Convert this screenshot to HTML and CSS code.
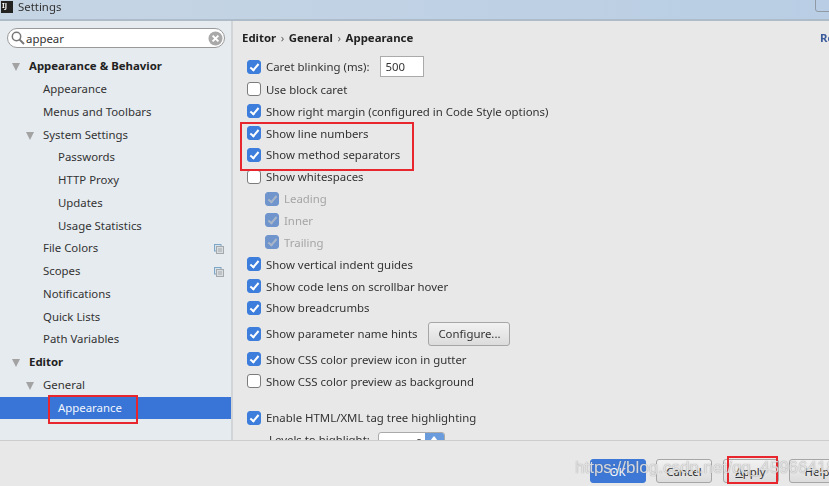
FILE: index.html
```html
<!DOCTYPE html>
<html lang="en">
<head>
    <meta charset="UTF-8">
    <meta name="viewport" content="width=device-width, initial-scale=1.0">
    <title>Settings</title>
    <link rel="stylesheet" href="styles.css">
</head>
<body>
    <div class="window">
        <div class="titlebar">
            <span class="logo">IJ</span>
            <span class="title">Settings</span>
            <span class="win-btn"></span>
        </div>

        <div class="main">
            <div class="sidebar">
                <div class="search">
                    <svg class="search-icon" width="14" height="14" viewBox="0 0 14 14"><circle cx="5.5" cy="5.5" r="4.2" fill="none" stroke="#777" stroke-width="1.5"/><path d="M8.6 8.6 L13 13" stroke="#777" stroke-width="2"/></svg>
                    <span class="search-text">appear</span>
                    <svg class="search-clear" width="15" height="15" viewBox="0 0 15 15"><circle cx="7.5" cy="7.5" r="7" fill="#a9a9a9"/><path d="M4.6 4.6 L10.4 10.4 M10.4 4.6 L4.6 10.4" stroke="#fff" stroke-width="2"/></svg>
                </div>
                <ul class="tree">
                    <li class="node bold"><span class="arrow"></span>Appearance &amp; Behavior</li>
                    <li class="node lvl1">Appearance</li>
                    <li class="node lvl1">Menus and Toolbars</li>
                    <li class="node lvl1"><span class="arrow"></span>System Settings</li>
                    <li class="node lvl2">Passwords</li>
                    <li class="node lvl2">HTTP Proxy</li>
                    <li class="node lvl2">Updates</li>
                    <li class="node lvl2">Usage Statistics</li>
                    <li class="node lvl1">File Colors
                        <svg class="copy-icon" width="10" height="10" viewBox="0 0 10 10"><rect x="0.5" y="0.5" width="6.5" height="6.5" fill="#d5e3ee" stroke="#7fa6c4"/><rect x="2.5" y="2.5" width="7" height="7" fill="#d9dde0" stroke="#a3a9ad"/><path d="M4 5 H8 M4 7 H8" stroke="#a3a9ad"/></svg>
                    </li>
                    <li class="node lvl1">Scopes
                        <svg class="copy-icon" width="10" height="10" viewBox="0 0 10 10"><rect x="0.5" y="0.5" width="6.5" height="6.5" fill="#d5e3ee" stroke="#7fa6c4"/><rect x="2.5" y="2.5" width="7" height="7" fill="#d9dde0" stroke="#a3a9ad"/><path d="M4 5 H8 M4 7 H8" stroke="#a3a9ad"/></svg>
                    </li>
                    <li class="node lvl1">Notifications</li>
                    <li class="node lvl1">Quick Lists</li>
                    <li class="node lvl1">Path Variables</li>
                    <li class="node bold"><span class="arrow"></span>Editor</li>
                    <li class="node lvl1"><span class="arrow"></span>General</li>
                    <li class="node lvl2 selected">Appearance</li>
                </ul>
            </div>

            <div class="content">
                <div class="crumbs">
                    <span>Editor</span><i>›</i><span>General</span><i>›</i><span>Appearance</span>
                    <span class="reset">Reset</span>
                </div>
                <div class="options">
                    <label class="row row-field"><input class="check" type="checkbox" checked>Caret blinking (ms):<span class="num">500</span></label>
                    <label class="row"><input class="check" type="checkbox">Use block caret</label>
                    <label class="row"><input class="check" type="checkbox" checked>Show right margin (configured in Code Style options)</label>
                    <label class="row"><input class="check" type="checkbox" checked>Show line numbers</label>
                    <label class="row"><input class="check" type="checkbox" checked>Show method separators</label>
                    <label class="row"><input class="check" type="checkbox">Show whitespaces</label>
                    <label class="row sub"><input class="check" type="checkbox" checked disabled>Leading</label>
                    <label class="row sub"><input class="check" type="checkbox" checked disabled>Inner</label>
                    <label class="row sub"><input class="check" type="checkbox" checked disabled>Trailing</label>
                    <label class="row"><input class="check" type="checkbox" checked>Show vertical indent guides</label>
                    <label class="row"><input class="check" type="checkbox" checked>Show code lens on scrollbar hover</label>
                    <label class="row"><input class="check" type="checkbox" checked>Show breadcrumbs</label>
                    <label class="row row-btn"><input class="check" type="checkbox" checked>Show parameter name hints<button class="btn configure">Configure...</button></label>
                    <label class="row"><input class="check" type="checkbox" checked>Show CSS color preview icon in gutter</label>
                    <label class="row"><input class="check" type="checkbox">Show CSS color preview as background</label>
                    <label class="row row-gap"><input class="check" type="checkbox" checked>Enable HTML/XML tag tree highlighting</label>
                    <div class="row levels">Levels to highlight:
                        <span class="spinner"><span class="spin-val">6</span><span class="spin-up"></span></span>
                    </div>
                </div>
            </div>
        </div>

        <div class="footer">
            <button class="btn primary">OK</button>
            <button class="btn">Cancel</button>
            <button class="btn"><u>A</u>pply</button>
            <button class="btn">Help</button>
        </div>
    </div>

    <!-- red marks drawn over the screenshot -->
    <div class="mark mark-rows"></div>
    <div class="mark mark-tree"></div>
    <div class="mark mark-apply"></div>
    <div class="watermark">https://blog.csdn.net/qq_45966418</div>
</body>
</html>
```

FILE: styles.css
```css
html, body {
    margin: 0;
    height: 100%;
    overflow: hidden;
}
body {
    position: relative;
    font-family: "Noto Sans", Arial, sans-serif;
    font-size: 11.4px;
    color: #333;
    background-color: #e8e8e8;
}
.window {
    display: flex;
    flex-direction: column;
    height: 486px;
    filter: blur(0.4px);
}

/* title bar */
.titlebar {
    display: flex;
    align-items: flex-start;
    flex: none;
    padding: 1px 0 0 1px;
    height: 18px;
    border-bottom: 2px solid #aebbc8;
    background: linear-gradient(90deg, #c6d5e4, #b9cee4);
    position: relative;
}
.logo {
    width: 12px;
    height: 12px;
    background-color: #222;
    color: #fff;
    font-size: 7px;
    font-weight: bold;
    line-height: 9px;
    padding-left: 1px;
    box-sizing: border-box;
}
.title {
    margin-left: 5px;
    line-height: 11px;
    color: #333;
}
.win-btn {
    position: absolute;
    right: -6px;
    top: -6px;
    width: 18px;
    height: 16px;
    border: 1px solid #8f9aa5;
    border-radius: 3px;
}

.main {
    display: flex;
    height: 419px;
    flex: none;
    overflow: hidden;
}

/* left tree */
.sidebar {
    width: 231px;
    flex: none;
    padding-top: 7px;
    background-color: #e6ebf0;
    border-right: 2px solid #d2d5d8;
}
.search {
    display: flex;
    align-items: center;
    height: 18px;
    margin: 0 6px 0 7px;
    padding: 0 1px 0 3px;
    background: white;
    border: 1px solid #999;
    border-radius: 10px;
}
.search-text {
    margin-left: 1px;
    flex: 1;
}
.tree {
    list-style: none;
    margin: 7.4px 0 0;
    padding: 0;
}
.node {
    position: relative;
    height: 22.75px;
    line-height: 22.75px;
    padding-left: 29px;
    white-space: nowrap;
}
.bold {
    font-weight: bold;
    color: #222;
}
.lvl1 { padding-left: 43px; }
.lvl2 { padding-left: 58px; }
.selected {
    background-color: #3875d7;
    color: #f2f6fc;
}
.arrow {
    position: absolute;
    margin-left: -17px;
    top: 8px;
    border-left: 4.5px solid transparent;
    border-right: 4.5px solid transparent;
    border-top: 8px solid #a3a3a3;
}
.copy-icon {
    position: absolute;
    left: 214px;
    top: 7px;
}

/* right panel */
.content {
    flex: 1;
    min-width: 0;
    overflow: hidden;
    padding-left: 9px;
}
.crumbs {
    position: relative;
    display: flex;
    align-items: center;
    height: 33.5px;
    font-weight: bold;
    color: #222;
    white-space: nowrap;
}
.crumbs i {
    margin: 0 4.5px;
    font-style: normal;
    font-weight: normal;
    color: #666;
}
.reset {
    position: absolute;
    left: 578px;
    color: #3a5a9c;
}
.options {
    display: flex;
    flex-direction: column;
    padding-left: 5px;
}
.row {
    display: flex;
    align-items: center;
    flex: none;
    height: 21.85px;
    white-space: nowrap;
}
.row-field { height: 24px; }
.row-btn { height: 29.6px; }
.row-gap { margin-top: 14.8px; }
.sub {
    padding-left: 18px;
    color: #a5a5a5;
}
.levels { padding-left: 22px; }
.check {
    appearance: none;
    position: relative;
    width: 14px;
    height: 14px;
    margin: 0 5px 0 0;
    flex: none;
    background: white;
    border: 1px solid #7c7c7c;
    border-radius: 3px;
    box-sizing: border-box;
}
.check:checked {
    background-color: #3d7ddb;
    border-color: #3d7ddb;
}
.check:checked::after {
    content: "";
    position: absolute;
    left: 3.5px;
    top: 1px;
    width: 3px;
    height: 7px;
    border: solid white;
    border-width: 0 2px 2px 0;
    transform: rotate(40deg);
}
.check:disabled {
    background-color: #6f95cc;
    border-color: #6f95cc;
}
.check:disabled::after { border-color: #a9b6c8; }
.num {
    width: 44px;
    height: 21px;
    margin-left: 10px;
    padding-left: 5px;
    box-sizing: border-box;
    line-height: 19px;
    background: white;
    border: 1px solid #aaa;
}
.spinner {
    display: flex;
    width: 67px;
    height: 22px;
    margin-left: 8px;
    margin-top: 6px;
    background: white;
    border: 1px solid #aaa;
    border-radius: 3px;
    box-sizing: border-box;
    overflow: hidden;
}
.spin-val {
    flex: 1;
    text-align: right;
    padding-right: 3px;
    line-height: 20px;
}
.spin-up {
    position: relative;
    width: 19px;
    background-color: #6a9bdc;
}
.spin-up::after {
    content: "";
    position: absolute;
    left: 5px;
    top: 3px;
    border-left: 4.5px solid transparent;
    border-right: 4.5px solid transparent;
    border-bottom: 5px solid white;
}

/* buttons */
.btn {
    width: 56px;
    height: 24px;
    padding: 0;
    font: inherit;
    color: #333;
    background: linear-gradient(#f2f2f2, #dcdcdc);
    border: 1px solid #a6a6a6;
    border-radius: 3px;
}
.configure {
    width: 82px;
    margin-left: 11px;
}
.primary {
    background: #3d78d6;
    border-color: #3d78d6;
    color: white;
}
.footer {
    display: flex;
    justify-content: flex-end;
    gap: 10.5px;
    flex: 1;
    margin-right: -16px;
    padding-top: 18px;
    box-sizing: border-box;
    border-top: 1px solid #cdcdcd;
    background-color: #e8e8e8;
}

/* annotations over the shot */
.mark {
    position: absolute;
    border: 2px solid #e8262d;
    box-sizing: border-box;
}
.mark-rows { left: 240px; top: 122px; width: 174px; height: 49px; }
.mark-tree { left: 48px; top: 395px; width: 90px; height: 29px; }
.mark-apply { left: 727px; top: 456px; width: 51px; height: 28px; }
.watermark {
    position: absolute;
    left: 575px;
    top: 458px;
    font-family: "Liberation Sans", Arial, sans-serif;
    font-size: 17px;
    color: rgba(255, 255, 255, 0.75);
    text-shadow: 0 0 1px rgba(90, 90, 90, 0.8);
    white-space: nowrap;
}
```
